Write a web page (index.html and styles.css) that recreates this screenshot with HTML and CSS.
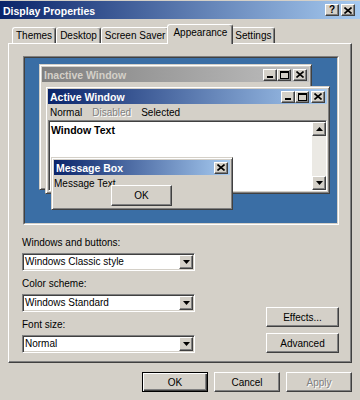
FILE: index.html
```html
<!DOCTYPE html>
<html lang="en">
<head>
    <meta charset="UTF-8">
    <meta name="viewport" content="width=device-width, initial-scale=1.0">
    <title>Display Properties</title>
    <link rel="stylesheet" href="styles.css">
</head>
<body>
    <!-- Title Bar -->
    <div class="titlebar">
        <span class="title">Display Properties</span>
        <div class="cbtns">
            <span class="cbtn help">?</span>
            <span class="cbtn close">
                <svg width="8" height="7" viewBox="0 0 8 7"><path d="M0.5 0.5L7.5 6.5M7.5 0.5L0.5 6.5" stroke="#000" stroke-width="1.6"/></svg>
            </span>
        </div>
    </div>

    <!-- Tabs -->
    <div class="tabs">
        <div class="tab">Themes</div>
        <div class="tab">Desktop</div>
        <div class="tab">Screen Saver</div>
        <div class="tab selected">Appearance</div>
        <div class="tab">Settings</div>
    </div>

    <!-- Tab Panel -->
    <div class="panel">
        <div class="preview">
            <div class="desktop">
                <!-- Inactive window -->
                <div class="win inactive">
                    <div class="caption">
                        <span>Inactive Window</span>
                        <div class="cbtns">
                            <span class="cbtn"><svg width="8" height="7" viewBox="0 0 8 7"><rect x="1" y="5" width="6" height="2"/></svg></span>
                            <span class="cbtn"><svg width="9" height="8" viewBox="0 0 9 8"><path d="M0 0h9v8H0z M1 2h7v5H1z" fill-rule="evenodd"/></svg></span>
                            <span class="cbtn close"><svg width="8" height="7" viewBox="0 0 8 7"><path d="M0.5 0.5L7.5 6.5M7.5 0.5L0.5 6.5" stroke="#000" stroke-width="1.6"/></svg></span>
                        </div>
                    </div>
                </div>

                <!-- Active window -->
                <div class="win active">
                    <div class="caption">
                        <span>Active Window</span>
                        <div class="cbtns">
                            <span class="cbtn"><svg width="8" height="7" viewBox="0 0 8 7"><rect x="1" y="5" width="6" height="2"/></svg></span>
                            <span class="cbtn"><svg width="9" height="8" viewBox="0 0 9 8"><path d="M0 0h9v8H0z M1 2h7v5H1z" fill-rule="evenodd"/></svg></span>
                            <span class="cbtn close"><svg width="8" height="7" viewBox="0 0 8 7"><path d="M0.5 0.5L7.5 6.5M7.5 0.5L0.5 6.5" stroke="#000" stroke-width="1.6"/></svg></span>
                        </div>
                    </div>
                    <div class="menu">
                        <span>Normal</span>
                        <span class="disabled">Disabled</span>
                        <span>Selected</span>
                    </div>
                    <div class="text-area">
                        <div class="text">Window Text</div>
                        <div class="scrollbar">
                            <span class="sbtn"><svg width="7" height="4" viewBox="0 0 7 4"><path d="M3.5 0L7 4H0z"/></svg></span>
                            <span class="track"></span>
                            <span class="sbtn"><svg width="7" height="4" viewBox="0 0 7 4"><path d="M0 0h7L3.5 4z"/></svg></span>
                        </div>
                    </div>
                </div>

                <!-- Message box -->
                <div class="win msgbox">
                    <div class="caption">
                        <span>Message Box</span>
                        <div class="cbtns">
                            <span class="cbtn"><svg width="8" height="7" viewBox="0 0 8 7"><path d="M0.5 0.5L7.5 6.5M7.5 0.5L0.5 6.5" stroke="#000" stroke-width="1.6"/></svg></span>
                        </div>
                    </div>
                    <div class="msg-body">
                        <span>Message Text</span>
                        <button class="btn msg-ok">OK</button>
                    </div>
                </div>
            </div>
        </div>

        <div class="options">
            <div class="fields">
                <div class="field-label">Windows and buttons:</div>
                <div class="combo">
                    <span class="value">Windows Classic style</span>
                    <span class="drop"><svg width="7" height="4" viewBox="0 0 7 4"><path d="M0 0h7L3.5 4z"/></svg></span>
                </div>
                <div class="field-label">Color scheme:</div>
                <div class="combo">
                    <span class="value">Windows Standard</span>
                    <span class="drop"><svg width="7" height="4" viewBox="0 0 7 4"><path d="M0 0h7L3.5 4z"/></svg></span>
                </div>
                <div class="field-label">Font size:</div>
                <div class="combo">
                    <span class="value">Normal</span>
                    <span class="drop"><svg width="7" height="4" viewBox="0 0 7 4"><path d="M0 0h7L3.5 4z"/></svg></span>
                </div>
            </div>
            <div class="side-btns">
                <button class="btn">Effects...</button>
                <button class="btn">Advanced</button>
            </div>
        </div>
    </div>

    <!-- Dialog Buttons -->
    <div class="actions">
        <button class="btn default">OK</button>
        <button class="btn">Cancel</button>
        <button class="btn" disabled>Apply</button>
    </div>
</body>
</html>
```

FILE: styles.css
```css
/* Basic Reset */
* {
    box-sizing: border-box;
    margin: 0;
    padding: 0;
}

body {
    width: 360px;
    height: 400px;
    overflow: hidden;
    background: #d4d0c8;
    font-family: "Liberation Sans", Arial, sans-serif;
    font-size: 10px;
    color: #000;
}

/* Title Bar */
.titlebar {
    display: flex;
    justify-content: space-between;
    align-items: center;
    height: 18px;
    margin-top: 1px;
    padding: 0 5px 0 3px;
    background: linear-gradient(to right, #0a246a, #a6caf0);
}

.title {
    color: #fff;
    font-weight: bold;
    font-size: 10.5px;
    padding-top: 1px;
}

.cbtns {
    display: flex;
}

.cbtn {
    width: 14px;
    height: 12px;
    display: flex;
    align-items: center;
    justify-content: center;
    background: #d4d0c8;
    border: 1px solid;
    border-color: #fff #404040 #404040 #fff;
    box-shadow: inset -1px -1px #808080;
    color: #000;
}

.cbtn.close {
    margin-left: 2px;
}

.cbtn.help {
    font-weight: bold;
    font-size: 10px;
    line-height: 10px;
}

/* Tabs */
.tabs {
    display: flex;
    align-items: flex-end;
    height: 24px;
    padding-left: 12px;
}

.tab {
    height: 16px;
    line-height: 15px;
    padding: 0 3px;
    border: 1px solid;
    border-bottom: none;
    border-color: #fff #404040 #404040 #fff;
    border-radius: 3px 3px 0 0;
    box-shadow: inset -1px 0 #808080;
}

.tab.selected {
    position: relative;
    z-index: 1;
    height: 20px;
    line-height: 16px;
    margin: 0 -2px -1px;
    padding: 0 5px;
    background: #d4d0c8;
}

/* Tab Panel */
.panel {
    width: 344px;
    height: 320px;
    margin-left: 8px;
    padding: 12px 12px 0 13px;
    border: 1px solid;
    border-color: #fff #404040 #404040 #fff;
    box-shadow: inset -1px -1px #808080;
}

/* Preview */
.preview {
    width: 316px;
    height: 169px;
    margin-left: 1px;
    border: 1px solid;
    border-color: #808080 #fff #fff #808080;
}

.desktop {
    position: relative;
    height: 100%;
    overflow: hidden;
    background: #3a6ea5;
    border: 1px solid;
    border-color: #404040 #d4d0c8 #d4d0c8 #404040;
}

.win {
    position: absolute;
    display: flex;
    flex-direction: column;
    padding: 2px;
    background: #d4d0c8;
    border: 1px solid;
    border-color: #d4d0c8 #404040 #404040 #d4d0c8;
    box-shadow: inset 1px 1px #fff, inset -1px -1px #808080;
}

.win.inactive {
    left: 14px;
    top: 6px;
    width: 273px;
    height: 126px;
}

.win.active {
    left: 20px;
    top: 28px;
    width: 285px;
    height: 108px;
}

.win.msgbox {
    left: 26px;
    top: 99px;
    width: 182px;
    height: 53px;
}

.caption {
    display: flex;
    justify-content: space-between;
    align-items: center;
    height: 15px;
    flex-shrink: 0;
    padding: 0 2px 0 2px;
    font-weight: bold;
    font-size: 10.5px;
    color: #fff;
    background: linear-gradient(to right, #0a246a, #a6caf0);
}

.inactive .caption {
    color: #d4d0c8;
    background: linear-gradient(to right, #808080, #c0c0c0);
}

.menu {
    display: flex;
    gap: 10px;
    height: 16px;
    align-items: center;
    padding-left: 2px;
}

.menu .disabled {
    color: #808080;
    text-shadow: 1px 1px #fff;
}

.text-area {
    flex: 1;
    display: flex;
    padding: 1px 0 0 1px;
    background: #fff;
    border: 1px solid;
    border-color: #808080 #fff #fff #808080;
    box-shadow: inset 1px 1px #404040;
}

.text {
    flex: 1;
    padding: 2px 0 0 1px;
    font-weight: bold;
    font-size: 10.5px;
}

.scrollbar {
    width: 14px;
    display: flex;
    flex-direction: column;
}

.sbtn {
    height: 14px;
    display: flex;
    align-items: center;
    justify-content: center;
    background: #d4d0c8;
    border: 1px solid;
    border-color: #fff #404040 #404040 #fff;
    box-shadow: inset -1px -1px #808080;
}

.track {
    flex: 1;
    background: #ebe9e4;
}

.msg-body {
    position: relative;
    flex: 1;
    line-height: 14px;
    padding-top: 2px;
}

.msg-ok {
    position: absolute;
    left: 57px;
    top: 10px;
    width: 61px;
    height: 21px;
}

/* Buttons */
.btn {
    font-family: inherit;
    font-size: 10px;
    color: #000;
    background: #d4d0c8;
    border: 1px solid;
    border-color: #fff #404040 #404040 #fff;
    box-shadow: inset -1px -1px #808080;
}

.btn.default {
    border-color: #000;
    box-shadow: inset 1px 1px #fff, inset -1px -1px #404040, inset -2px -2px #808080;
}

.btn:disabled {
    color: #808080;
    text-shadow: 1px 1px #fff;
}

/* Options */
.options {
    display: flex;
    justify-content: space-between;
    align-items: flex-end;
    margin-top: 12px;
}

.fields {
    width: 173px;
}

.field-label {
    line-height: 12px;
    margin-bottom: 4px;
}

.combo {
    display: flex;
    height: 18px;
    margin-bottom: 7px;
    padding: 1px;
    background: #fff;
    border: 1px solid;
    border-color: #808080 #fff #fff #808080;
    box-shadow: inset 1px 1px #404040, inset -1px -1px #d4d0c8;
}

.combo:last-child {
    margin-bottom: 0;
}

.combo .value {
    flex: 1;
    line-height: 14px;
    padding-left: 1px;
}

.combo .drop {
    width: 14px;
    display: flex;
    align-items: center;
    justify-content: center;
    background: #d4d0c8;
    border: 1px solid;
    border-color: #fff #404040 #404040 #fff;
    box-shadow: inset -1px -1px #808080;
}

.side-btns {
    display: flex;
    flex-direction: column;
    gap: 6px;
}

.side-btns .btn {
    width: 73px;
    height: 20px;
}

/* Dialog Buttons */
.actions {
    display: flex;
    justify-content: flex-end;
    gap: 6px;
    margin-top: 9px;
    padding-right: 8px;
}

.actions .btn {
    width: 66px;
    height: 20px;
}
```
